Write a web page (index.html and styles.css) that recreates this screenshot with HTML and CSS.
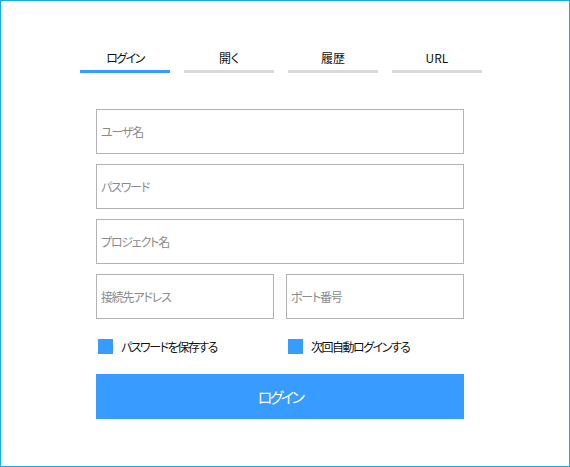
FILE: index.html
```html
<!DOCTYPE html>
<html lang="ja">
<head>
<meta charset="utf-8">
<title>ログイン</title>
<link rel="stylesheet" href="styles.css">
</head>
<body>
<div class="frame">
  <div class="tabs">
    <div class="tab active tight">ログイン</div>
    <div class="tab">開く</div>
    <div class="tab">履歴</div>
    <div class="tab">URL</div>
  </div>
  <form class="form">
    <input class="field" type="text" placeholder="ユーザ名">
    <input class="field" type="password" placeholder="パスワード">
    <input class="field" type="text" placeholder="プロジェクト名">
    <div class="pair">
      <input class="field" type="text" placeholder="接続先アドレス">
      <input class="field" type="text" placeholder="ポート番号">
    </div>
    <div class="checks">
      <label class="check"><span class="box"></span><span>パスワードを保存する</span></label>
      <label class="check"><span class="box"></span><span>次回自動ログインする</span></label>
    </div>
    <button class="submit" type="button">ログイン</button>
  </form>
</div>
</body>
</html>
```
FILE: styles.css
```css
html, body {
  margin: 0;
  padding: 0;
  background: #fff;
}
body {
  font-family: "Noto Sans CJK JP", "Noto Sans", sans-serif;
  font-feature-settings: "palt" 1;
  color: #111;
}
.frame {
  width: 570px;
  height: 467px;
  box-sizing: border-box;
  border: 1px solid #17ace6;
  background: #fff;
}
.tabs {
  display: flex;
  gap: 14px;
  margin: 47px 0 0 79px;
}
.tab {
  width: 90px;
  text-align: center;
  font-size: 12px;
  line-height: 20px;
  padding-bottom: 2px;
  border-bottom: 3px solid #dadada;
  color: #111;
}
.tab.tight {
  letter-spacing: -1.5px;
}
.tab.active {
  border-bottom-color: #389bff;
}
.form {
  margin: 36px 0 0 95px;
  width: 368px;
  display: flex;
  flex-direction: column;
  gap: 10px;
}
.field {
  display: block;
  box-sizing: border-box;
  width: 100%;
  height: 45px;
  margin: 0;
  border: 1px solid #b3b3b3;
  border-radius: 0;
  padding: 0 0 0 4px;
  font-family: "Noto Sans CJK JP", "Noto Sans", sans-serif;
  font-feature-settings: "palt" 1;
  font-size: 12px;
  letter-spacing: -1.2px;
  color: #333;
  background: #fff;
  outline: none;
}
.field::placeholder {
  color: #8a8a8a;
}
.pair {
  display: grid;
  grid-template-columns: 178px 178px;
  gap: 12px;
}
.checks {
  display: grid;
  grid-template-columns: 178px 178px;
  gap: 12px;
  margin-top: 10px;
}
.check {
  display: flex;
  align-items: center;
  gap: 8px;
  padding-left: 2px;
  font-size: 12px;
  letter-spacing: -1.5px;
  line-height: 15px;
  color: #111;
}
.box {
  width: 15px;
  height: 15px;
  background: #389bff;
  flex: none;
}
.submit {
  margin-top: 10px;
  height: 45px;
  width: 100%;
  border: none;
  border-radius: 0;
  background: #389bff;
  color: #fff;
  font-family: "Noto Sans CJK JP", "Noto Sans", sans-serif;
  font-feature-settings: "palt" 1;
  font-size: 15px;
  letter-spacing: -2.5px;
  padding: 0;
}
```
